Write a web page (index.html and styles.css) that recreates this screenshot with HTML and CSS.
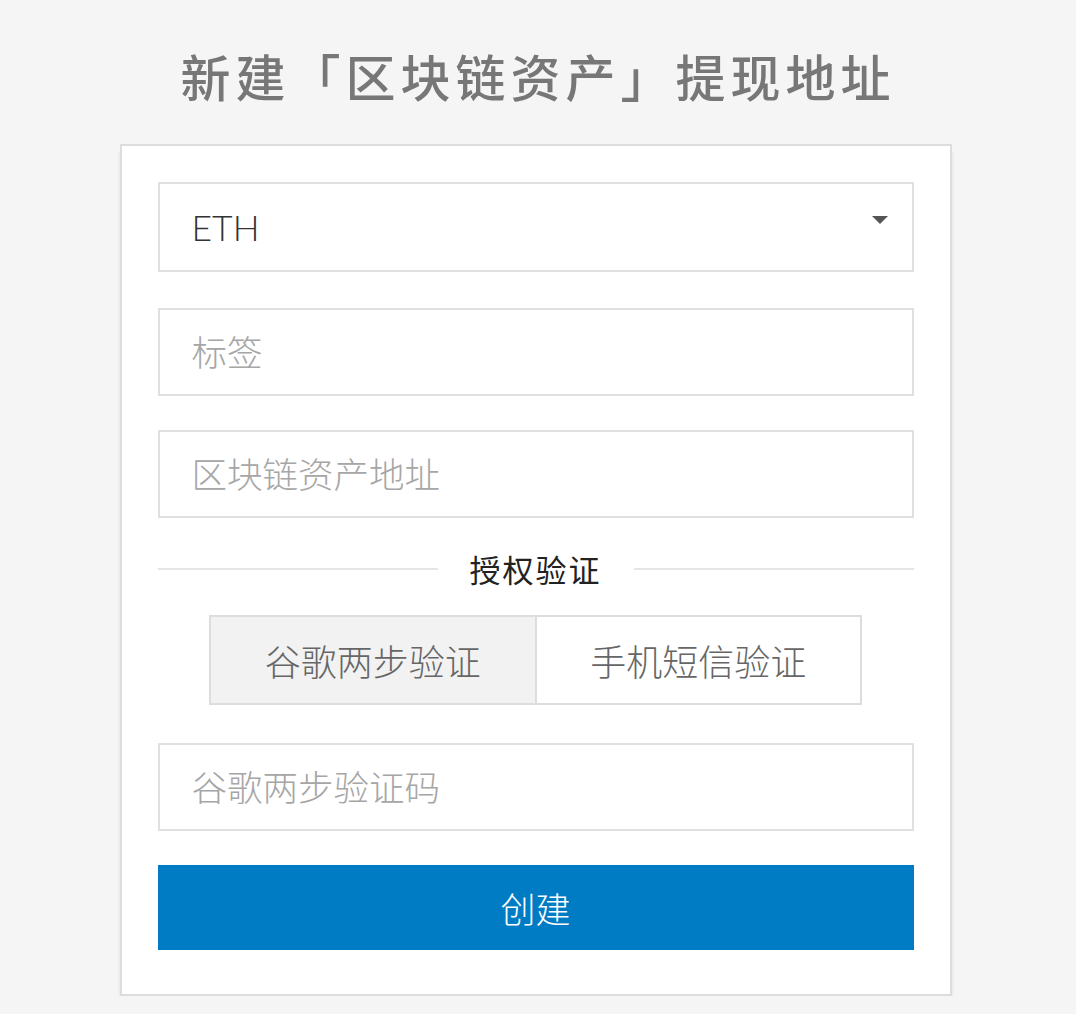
FILE: index.html
```html
<!DOCTYPE html>
<html>
<head>
  <meta charset="utf-8">
  <title>新建提现地址</title>
  <link rel="stylesheet" href="styles.css">
</head>
<body>
  <div class="page">
    <h1 class="title">新建「区块链资产」提现地址</h1>

    <form class="card">
      <div class="field select-field">
        <span class="value">ETH</span>
        <span class="caret"></span>
      </div>

      <input class="field" type="text" placeholder="标签">
      <input class="field" type="text" placeholder="区块链资产地址">

      <div class="divider"><span>授权验证</span></div>

      <div class="tabs">
        <div class="tab active">谷歌两步验证</div>
        <div class="tab">手机短信验证</div>
      </div>

      <input class="field" type="text" placeholder="谷歌两步验证码">

      <button class="submit" type="button">创建</button>
    </form>
  </div>
</body>
</html>
```

FILE: styles.css
```css
html, body {
  margin: 0;
  background: #f5f5f5;
}

body {
  font-family: Lato, "Noto Sans CJK SC", sans-serif;
}

.page {
  width: 1071px;
  padding-top: 36px;
}

.title {
  margin: 0 0 30px;
  text-align: center;
  font-family: "Noto Sans CJK SC", sans-serif;
  font-size: 50px;
  font-weight: 500;
  line-height: 78px;
  letter-spacing: 5px;
  text-indent: 5px;
  color: #777;
}

.card {
  width: 756px;
  margin: 0 auto;
  padding: 36px 36px 44px;
  background: #fff;
  border: 2px solid #ddd;
  display: flex;
  flex-direction: column;
  box-shadow: 0 3px 0 #fff, 0 5px 0 #d8d8d8, 0 7px 3px rgba(0, 0, 0, 0.1);
}

.field {
  box-sizing: border-box;
  width: 100%;
  height: 88px;
  margin: 0 0 34px;
  padding: 0 32px;
  border: 2px solid #e0e0e0;
  background: #fff;
  font-family: Lato, "Noto Sans CJK SC", sans-serif;
  font-size: 35.5px;
  font-weight: 300;
  color: #333;
  outline: none;
}

.field::placeholder {
  color: #a6a6a6;
}

.select-field {
  height: 90px;
  margin-bottom: 36px;
  display: flex;
  align-items: center;
  justify-content: space-between;
  padding-right: 24px;
}

.caret {
  width: 0;
  height: 0;
  border-left: 8px solid transparent;
  border-right: 8px solid transparent;
  border-top: 8px solid #555;
  margin-top: -14px;
}

.divider {
  display: flex;
  align-items: center;
  gap: 32px;
  margin: -6px 0 24px;
  font-family: "Noto Sans CJK SC", sans-serif;
  font-size: 31px;
  letter-spacing: 2px;
  color: #222;
}

.divider::before,
.divider::after {
  content: "";
  flex: 1;
  height: 2px;
  background: #e5e5e5;
}

.tabs {
  display: flex;
  align-self: center;
  width: 653px;
  margin-bottom: 38px;
  border: 2px solid #ddd;
  box-sizing: border-box;
}

.tab {
  flex: 1;
  height: 86px;
  display: flex;
  align-items: center;
  justify-content: center;
  font-family: "Noto Sans CJK SC", sans-serif;
  font-size: 36px;
  font-weight: 300;
  color: #666;
  background: #fff;
}

.tab.active {
  background: #f2f2f2;
  border-right: 2px solid #ddd;
}

.submit {
  height: 85px;
  border: none;
  background: #007cc5;
  color: #fff;
  font-family: "Noto Sans CJK SC", sans-serif;
  font-size: 35px;
  font-weight: 300;
  cursor: pointer;
}
```
